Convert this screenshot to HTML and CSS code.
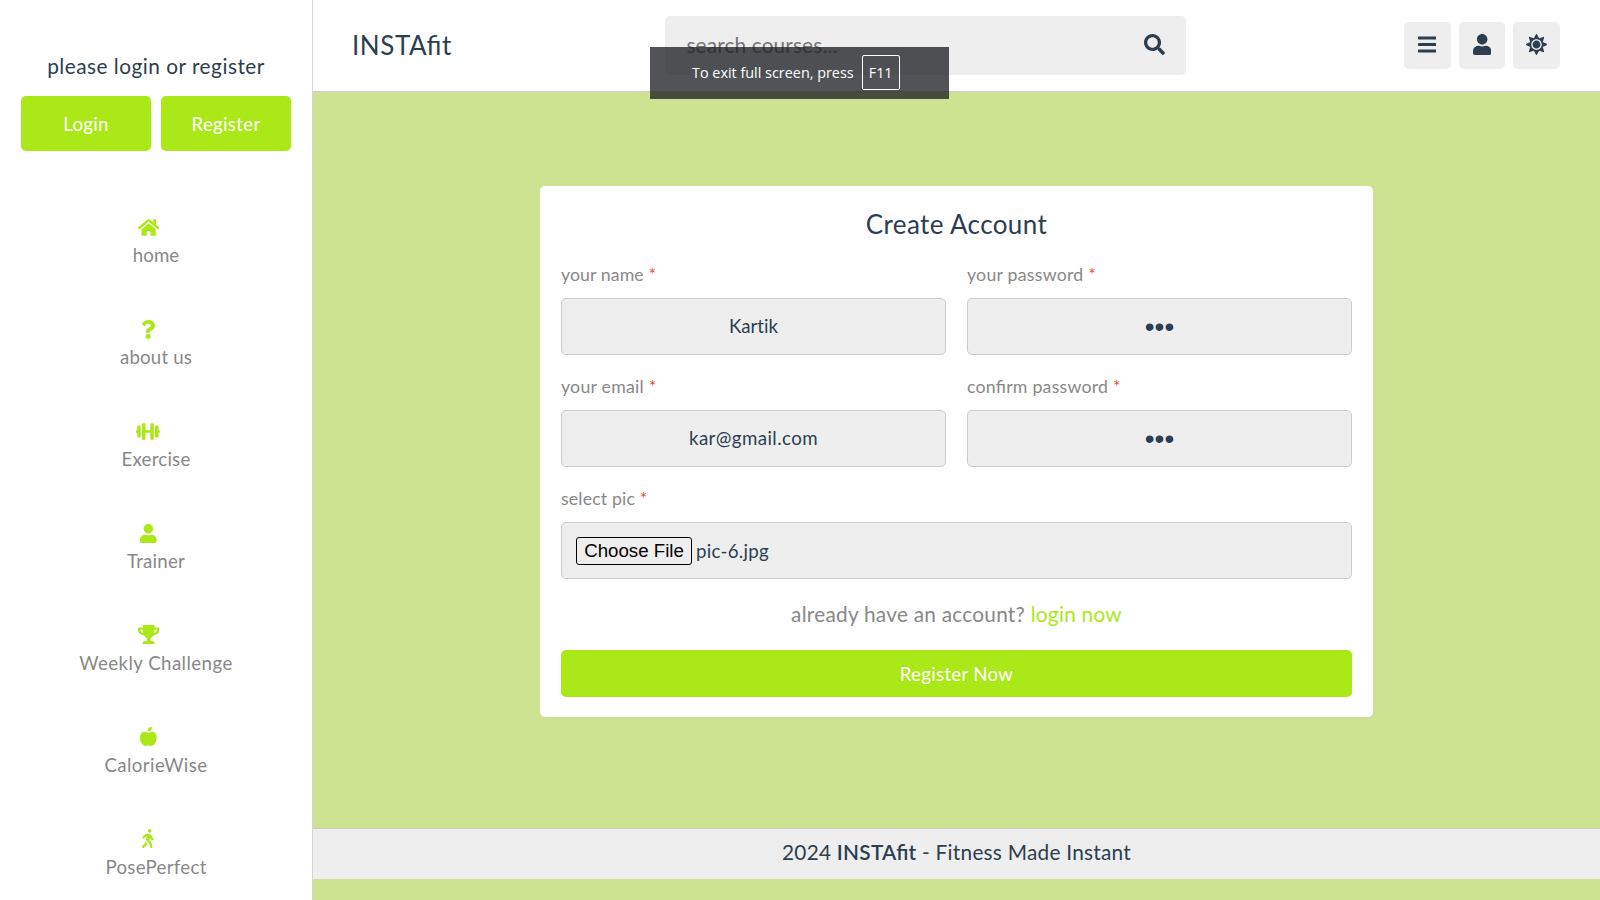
FILE: index.html
```html
<!DOCTYPE html>
<html lang="en">
<head>
<meta charset="utf-8">
<title>INSTAfit - Create Account</title>
<link rel="stylesheet" href="styles.css">
</head>
<body>
<aside class="sidebar">
  <h3 class="guest">please login or register</h3>
  <div class="auth">
    <a class="btn">Login</a>
    <a class="btn">Register</a>
  </div>
  <nav class="nav">
    <a class="nav-item">
      <svg viewBox="0 0 576 512"><path d="M280.37 148.26L96 300.11V464a16 16 0 0 0 16 16l112.06-.29a16 16 0 0 0 15.92-16V368a16 16 0 0 1 16-16h64a16 16 0 0 1 16 16v95.64a16 16 0 0 0 16 16.05L464 480a16 16 0 0 0 16-16V300L295.67 148.26a12.19 12.19 0 0 0-15.3 0zM571.6 251.47L488 182.56V44.05a12 12 0 0 0-12-12h-56a12 12 0 0 0-12 12v72.61L318.47 43a48 48 0 0 0-61 0L4.34 251.47a12 12 0 0 0-1.6 16.9l25.5 31A12 12 0 0 0 45.15 301l235.22-193.74a12.19 12.19 0 0 1 15.3 0L530.9 301a12 12 0 0 0 16.9-1.6l25.5-31a12 12 0 0 0-1.7-16.93z"/></svg>
      <span class="t-home">home</span>
    </a>
    <a class="nav-item">
      <svg viewBox="0 0 384 512"><path d="M202.021 0C122.202 0 70.503 32.703 29.914 91.026c-7.363 10.58-5.093 25.086 5.178 32.874l43.138 32.709c10.373 7.865 25.132 6.026 33.253-4.148 25.049-31.381 43.63-49.449 82.757-49.449 30.764 0 68.816 19.799 68.816 49.631 0 22.552-18.617 34.134-48.993 51.164-35.423 19.86-82.299 44.576-82.299 106.405V320c0 13.255 10.745 24 24 24h72.471c13.255 0 24-10.745 24-24v-5.773c0-42.86 125.268-44.645 125.268-160.627C377.504 66.256 286.902 0 202.021 0zM192 373.459c-38.196 0-69.271 31.075-69.271 69.271 0 38.195 31.075 69.27 69.271 69.27s69.271-31.075 69.271-69.271-31.075-69.27-69.271-69.27z"/></svg>
      <span class="t-about">about us</span>
    </a>
    <a class="nav-item">
      <svg viewBox="0 0 640 512"><path d="M104 96H56c-13.3 0-24 10.7-24 24v104H8c-4.4 0-8 3.6-8 8v48c0 4.4 3.6 8 8 8h24v104c0 13.3 10.7 24 24 24h48c13.3 0 24-10.7 24-24V120c0-13.3-10.7-24-24-24zm528 128h-24V120c0-13.3-10.7-24-24-24h-48c-13.3 0-24 10.7-24 24v272c0 13.3 10.7 24 24 24h48c13.3 0 24-10.7 24-24V288h24c4.4 0 8-3.6 8-8v-48c0-4.4-3.6-8-8-8zM456 32h-48c-13.3 0-24 10.7-24 24v168H256V56c0-13.3-10.7-24-24-24h-48c-13.3 0-24 10.7-24 24v400c0 13.3 10.7 24 24 24h48c13.3 0 24-10.7 24-24V288h128v168c0 13.3 10.7 24 24 24h48c13.3 0 24-10.7 24-24V56c0-13.3-10.7-24-24-24z"/></svg>
      <span class="t-trainer">Exercise</span>
    </a>
    <a class="nav-item">
      <svg viewBox="0 0 448 512"><path d="M224 256c70.7 0 128-57.3 128-128S294.7 0 224 0 96 57.3 96 128s57.3 128 128 128zm89.6 32h-16.7c-22.2 10.2-46.9 16-72.9 16s-50.6-5.8-72.9-16h-16.7C60.2 288 0 348.2 0 422.4V464c0 26.5 21.5 48 48 48h352c26.5 0 48-21.5 48-48v-41.6c0-74.2-60.2-134.4-134.4-134.4z"/></svg>
      <span class="t-trainer">Trainer</span>
    </a>
    <a class="nav-item">
      <svg viewBox="0 0 576 512"><path d="M552 64H448V24c0-13.3-10.7-24-24-24H152c-13.3 0-24 10.7-24 24v40H24C10.7 64 0 74.7 0 88v56c0 35.7 22.5 72.4 61.9 100.7 31.5 22.7 69.8 37.1 110 41.7C203.3 338.5 240 360 240 360v72h-48c-35.3 0-64 20.7-64 56v12c0 6.6 5.4 12 12 12h296c6.6 0 12-5.4 12-12v-12c0-35.3-28.7-56-64-56h-48v-72s36.7-21.5 68.1-73.6c40.3-4.6 78.6-19 110-41.7 39.3-28.3 61.9-65 61.9-100.7V88c0-13.3-10.7-24-24-24zM99.3 192.8C74.9 175.2 64 155.6 64 144v-16h64.2c1 32.6 5.8 61.2 12.8 86.2-15.1-5.2-29.2-12.4-41.7-21.4zM512 144c0 16.1-17.7 36.1-35.3 48.8-12.5 9-26.7 16.2-41.8 21.4 7-25 11.8-53.6 12.8-86.2H512v16z"/></svg>
      <span class="t-weekly">Weekly Challenge</span>
    </a>
    <a class="nav-item">
      <svg viewBox="0 0 448 512"><path d="M350.85 129c25.97 4.67 47.27 18.67 63.92 42 14.65 20.67 24.64 46.67 29.96 78 4.67 28.67 4.32 57.33-1 86-7.99 47.33-23.97 87-47.94 119-28.64 38.67-64.59 58-107.87 58-10.66 0-22.3-3.33-34.96-10-8.66-5.33-18.31-8-28.97-8s-20.3 2.67-28.97 8c-12.66 6.67-24.3 10-34.96 10-43.28 0-79.23-19.33-107.87-58-23.97-32-39.95-71.67-47.94-119-5.32-28.67-5.67-57.33-1-86 5.32-31.33 15.31-57.33 29.96-78 16.65-23.33 37.95-37.33 63.92-42 15.98-2.67 37.95-.33 65.92 7 23.97 6.67 44.28 14.67 60.93 24 16.65-9.33 36.96-17.33 60.93-24 27.98-7.33 49.96-9.67 65.94-7zm-54.94-41c-9.32 8.67-21.65 15-36.96 19-10.66 3.33-22.3 5-34.96 5l-14.98-1c-1.33-9.33-1.33-20 0-32 2.67-24 10.32-42.33 22.97-55 9.32-8.67 21.65-15 36.96-19 10.66-3.33 22.3-5 34.96-5l14.98 1 1 15c0 12.67-1.67 24.33-4.99 35-3.99 15.33-10.31 27.67-18.98 37z"/></svg>
      <span class="t-weekly">CalorieWise</span>
    </a>
    <a class="nav-item">
      <svg viewBox="0 0 320 512"><path d="M208 96c26.5 0 48-21.5 48-48S234.5 0 208 0s-48 21.5-48 48 21.5 48 48 48zm94.5 149.1l-23.3-11.8-9.7-29.4c-14.7-44.6-55.7-75.8-102.2-75.9-36-.1-55.9 10.1-93.3 25.2-21.6 8.7-39.3 25.2-49.7 46.2L17.6 213c-7.8 15.8-1.5 35 14.2 42.9 15.6 7.9 34.6 1.5 42.5-14.3L81 228c3.5-7 9.3-12.5 16.5-15.4l26.8-10.8-15.2 60.7c-5.2 20.8.4 42.9 14.9 58.8l59.9 65.4c7.2 7.9 12.3 17.4 14.9 27.7l18.3 73.3c4.3 17.1 21.7 27.6 38.8 23.3 17.1-4.3 27.6-21.7 23.3-38.8l-22.2-89c-2.6-10.3-7.7-19.9-14.9-27.7l-45.5-49.7 17.2-68.7 5.5 16.5c5.3 16.1 16.7 29.4 31.7 37l23.3 11.8c15.6 7.9 34.6 1.5 42.5-14.3 7.7-15.7 1.4-35.1-14.3-43zM73.6 385.8c-3.2 8.1-8 15.4-14.2 21.5l-50 50.1c-12.5 12.5-12.5 32.8 0 45.3s32.7 12.5 45.2 0l59.4-59.4c6.1-6.1 10.9-13.4 14.2-21.5l13.5-33.8c-55.3-60.3-38.7-41.8-47.4-53.7l-20.7 51.5z"/></svg>
      <span class="t-pose">PosePerfect</span>
    </a>
  </nav>
</aside>
<div class="page">
  <header class="header">
    <a class="logo">INSTAfit</a>
    <div class="search">
      <span>search courses...</span>
      <svg viewBox="0 0 512 512"><path d="M505 442.7L405.3 343c-4.5-4.5-10.6-7-17-7H372c27.6-35.3 44-79.7 44-128C416 93.1 322.9 0 208 0S0 93.1 0 208s93.1 208 208 208c48.3 0 92.7-16.4 128-44v16.3c0 6.4 2.5 12.5 7 17l99.7 99.7c9.4 9.4 24.6 9.4 33.9 0l28.3-28.3c9.4-9.4 9.4-24.6.1-34zM208 336c-70.7 0-128-57.2-128-128 0-70.7 57.2-128 128-128 70.7 0 128 57.2 128 128 0 70.7-57.2 128-128 128z"/></svg>
    </div>
    <div class="icons">
      <span class="icon"><svg viewBox="0 0 448 512"><path d="M16 132h416c8.837 0 16-7.163 16-16V76c0-8.837-7.163-16-16-16H16C7.163 60 0 67.163 0 76v40c0 8.837 7.163 16 16 16zm0 160h416c8.837 0 16-7.163 16-16v-40c0-8.837-7.163-16-16-16H16c-8.837 0-16 7.163-16 16v40c0 8.837 7.163 16 16 16zm0 160h416c8.837 0 16-7.163 16-16v-40c0-8.837-7.163-16-16-16H16c-8.837 0-16 7.163-16 16v40c0 8.837 7.163 16 16 16z"/></svg></span>
      <span class="icon"><svg viewBox="0 0 448 512"><path d="M224 256c70.7 0 128-57.3 128-128S294.7 0 224 0 96 57.3 96 128s57.3 128 128 128zm89.6 32h-16.7c-22.2 10.2-46.9 16-72.9 16s-50.6-5.8-72.9-16h-16.7C60.2 288 0 348.2 0 422.4V464c0 26.5 21.5 48 48 48h352c26.5 0 48-21.5 48-48v-41.6c0-74.2-60.2-134.4-134.4-134.4z"/></svg></span>
      <span class="icon"><svg viewBox="0 0 512 512"><path d="M256 160c-52.9 0-96 43.1-96 96s43.1 96 96 96 96-43.1 96-96-43.1-96-96-96zm246.4 80.5l-94.7-47.3 33.5-100.4c4.5-13.6-8.4-26.5-21.9-21.9l-100.4 33.5-47.4-94.8c-6.4-12.8-24.6-12.8-31 0l-47.3 94.7L92.7 70.8c-13.6-4.5-26.5 8.4-21.9 21.9l33.5 100.4-94.7 47.4c-12.8 6.4-12.8 24.6 0 31l94.7 47.3-33.5 100.5c-4.5 13.6 8.4 26.5 21.9 21.9l100.4-33.5 47.3 94.7c6.4 12.8 24.6 12.8 31 0l47.3-94.7 100.4 33.5c13.6 4.5 26.5-8.4 21.9-21.9l-33.5-100.4 94.7-47.3c13-6.5 13-24.7.2-31.1zm-155.9 106c-49.9 49.9-131.1 49.9-181 0-49.9-49.9-49.9-131.1 0-181 49.9-49.9 131.1-49.9 181 0 49.9 49.9 49.9 131.1 0 181z"/></svg></span>
    </div>
  </header>
  <main class="main">
    <form class="card">
      <h3 class="title">Create Account</h3>
      <div class="fields">
        <div class="field">
          <p class="label t-name">your name <i>*</i></p>
          <div class="box t-kartik">Kartik</div>
        </div>
        <div class="field">
          <p class="label t-pass">your password <i>*</i></p>
          <div class="box dots">•••</div>
        </div>
        <div class="field">
          <p class="label t-pass">your email <i>*</i></p>
          <div class="box t-mail">kar@gmail.com</div>
        </div>
        <div class="field">
          <p class="label t-pass liga">confirm password <i>*</i></p>
          <div class="box dots">•••</div>
        </div>
        <div class="field wide">
          <p class="label t-select">select pic <i>*</i></p>
          <div class="box file"><span class="choose">Choose File</span>pic-6.jpg</div>
        </div>
      </div>
      <p class="link">already have an account? <a>login now</a></p>
      <div class="btn submit">Register Now</div>
    </form>
  </main>
  <footer class="footer">2024&nbsp;<b>INSTAfit</b>&nbsp;- Fitness Made Instant</footer>
</div>
<div class="toast">To exit full screen, press <kbd>F11</kbd></div>
</body>
</html>
```
FILE: styles.css
```css
* { box-sizing: border-box; margin: 0; padding: 0; }
body {
  display: flex;
  height: 900px;
  overflow: hidden;
  background: #cde392;
  color: #2c3e50;
  font-family: Lato, "Liberation Sans", sans-serif;
  font-size: 18.7px;
}
svg { display: block; fill: currentColor; }

.sidebar {
  width: 313px;
  flex: none;
  padding: 50px 21px 0;
  background: #fff;
  border-right: 1px solid #d4d4d4;
  overflow: hidden;
}
.guest {
  font-size: 20.8px;
  font-weight: 400;
  line-height: 31px;
  letter-spacing: .5px;
  text-align: center;
}
.auth { display: flex; gap: 10px; margin-top: 15px; }
.btn {
  flex: 1;
  height: 55px;
  display: flex;
  align-items: center;
  justify-content: center;
  border-radius: 5px;
  background: #abe817;
  color: #fff;
  letter-spacing: .3px;
}
.nav { margin-top: 66.4px; }
.nav-item {
  display: flex;
  flex-direction: column;
  align-items: center;
  gap: 6px;
  margin-bottom: 50.9px;
  color: #888;
  line-height: 25px;
}
.nav-item svg { height: 19px; margin: .5px 15.4px .5px 0; color: #abe817; }
.t-home { letter-spacing: .06px; }
.t-about { letter-spacing: .15px; }
.t-trainer { letter-spacing: .21px; }
.t-weekly { letter-spacing: .42px; }
.t-pose { letter-spacing: .28px; }

.page { flex: 1; display: flex; flex-direction: column; }
.header {
  height: 92px;
  display: flex;
  align-items: center;
  justify-content: space-between;
  padding: 0 40px 1px 39px;
  background: #fff;
  border-bottom: 1px solid #ccc;
}
.logo { width: 204px; font-size: 26px; letter-spacing: .55px; font-feature-settings: "liga" 1; }
.search {
  width: 521px;
  height: 59px;
  display: flex;
  align-items: center;
  justify-content: space-between;
  margin-left: -108px;
  padding: 0 21px 1px;
  border-radius: 5px;
  background: #eee;
  color: #757575;
  font-size: 20.8px;
  letter-spacing: .14px;
}
.search svg { width: 21px; height: 21px; color: #2c3e50; }
.icons { display: flex; gap: 8px; }
.icon {
  width: 46.7px;
  height: 47px;
  display: flex;
  align-items: center;
  justify-content: center;
  border-radius: 5px;
  background: #eee;
}
.icon svg { height: 21px; margin-bottom: 1px; }

.main { height: 736px; padding-top: 94px; }
.card {
  width: 833px;
  height: 531px;
  margin: 0 auto;
  padding: 22px 21px 21px;
  border-radius: 5px;
  background: #fff;
}
.title { font-size: 26px; font-weight: 400; line-height: 33px; letter-spacing: .38px; text-align: center; }
.fields { display: grid; grid-template-columns: 1fr 1fr; gap: 18.5px 21px; margin-top: 20.5px; }
.wide { grid-column: span 2; }
.label { color: #888; font-size: 17.7px; line-height: 26px; margin-bottom: 10.5px; }
.label i { color: #e74c3c; font-style: normal; }
.box {
  height: 57px;
  display: flex;
  align-items: center;
  justify-content: center;
  padding-bottom: 1px;
  border: 1px solid #ccc;
  border-radius: 5px;
  background: #eee;
}
.t-name { letter-spacing: .1px; }
.t-pass { letter-spacing: .25px; }
.t-select { letter-spacing: .16px; }
.liga { font-feature-settings: "liga" 1; }
.t-kartik { font-variant-ligatures: none; }
.t-mail { letter-spacing: .41px; }
.dots { padding: 1px 0 0; font: 28px/1 "Liberation Sans", sans-serif; }
.file { justify-content: flex-start; padding: 0 0 0 14px; gap: 4px; letter-spacing: .27px; }
.choose {
  width: 116px;
  height: 28px;
  border: 1.5px solid #000;
  border-radius: 3px;
  color: #000;
  font: 18.7px/25px "Liberation Sans", sans-serif;
  letter-spacing: 0;
  text-align: center;
}
.link { margin-top: 20px; color: #888; font-size: 20.8px; line-height: 30px; letter-spacing: .25px; text-align: center; }
.link a { color: #abe817; }
.submit { height: 47px; margin-top: 20.5px; padding-top: 1px; }

.footer {
  height: 51px;
  display: flex;
  align-items: center;
  justify-content: center;
  padding-bottom: 5px;
  border-top: 1px solid #ccc;
  background: #eee;
  font-size: 20.8px;
  letter-spacing: .25px;
}
.footer b { font-weight: 600; font-feature-settings: "liga" 1; }

/* Floating full-screen notice over the header */
.toast {
  position: absolute;
  left: 650px;
  top: 46.5px;
  width: 299px;
  height: 52px;
  display: flex;
  align-items: center;
  gap: 8px;
  padding: 0 0 1px 42px;
  background: rgba(32, 35, 40, .78);
  color: #fff;
  font: 14.4px "Open Sans", sans-serif;
}
.toast kbd {
  width: 38px;
  height: 35px;
  border: 1px solid #fff;
  border-radius: 2px;
  font: 14.4px/33px "Open Sans", sans-serif;
  text-align: center;
}
```
